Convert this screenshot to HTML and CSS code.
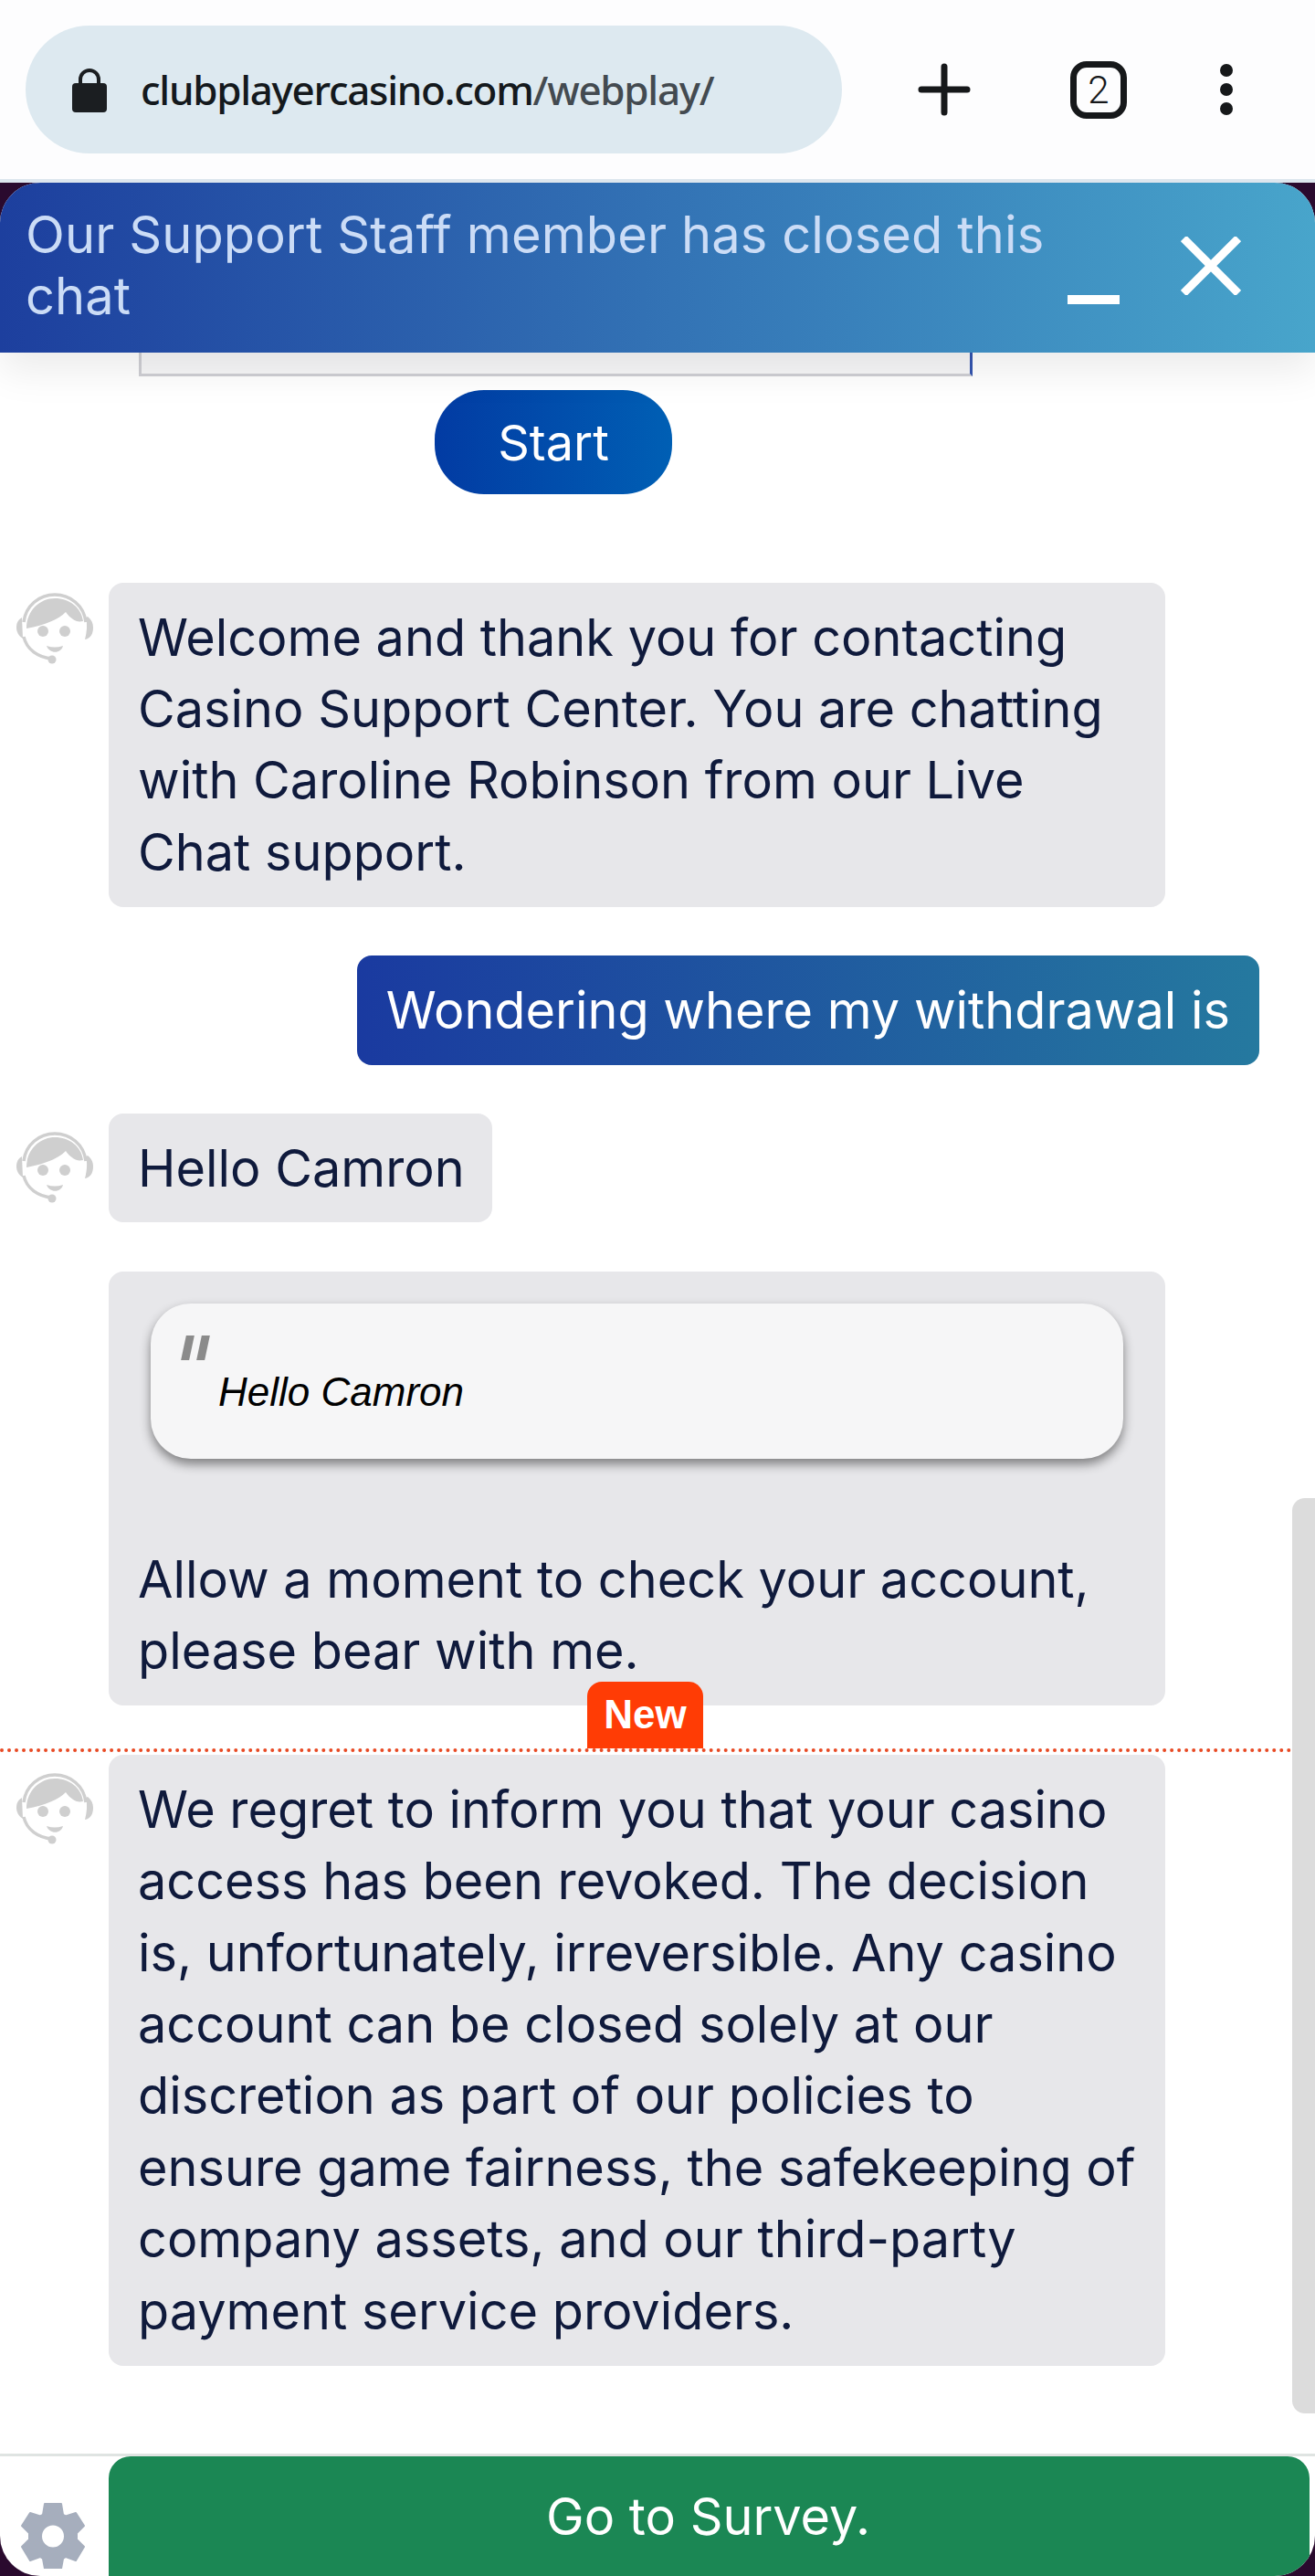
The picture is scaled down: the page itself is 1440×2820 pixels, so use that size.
FILE: index.html
```html
<!DOCTYPE html>
<html lang="en">
<head>
<meta charset="utf-8">
<title>Casino Support Chat</title>
<link rel="stylesheet" href="styles.css">
</head>
<body>
<div class="browser">
  <div class="url-pill">
    <svg class="lock" viewBox="0 0 38 49"><path d="M9 20V13a10 10 0 0 1 20 0v7" fill="none" stroke="#1b1e21" stroke-width="4"/><rect y="17" width="38" height="32" rx="4" fill="#1b1e21"/></svg>
    <span class="url"><span class="url-host">clubplayercasino.com</span><span class="url-path">/webplay/</span></span>
  </div>
  <svg class="b-plus" viewBox="0 0 58 58"><path d="M29 4v50M4 29h50" stroke="#16181a" stroke-width="7" stroke-linecap="round"/></svg>
  <div class="b-tabs">2</div>
  <svg class="b-dots" viewBox="0 0 16 58"><circle cx="8" cy="8" r="7" fill="#16181a"/><circle cx="8" cy="29" r="7" fill="#16181a"/><circle cx="8" cy="50" r="7" fill="#16181a"/></svg>
</div>
<div class="widget">
  <header class="head">
    <div class="head-text">Our Support Staff member has closed this chat</div>
    <div class="head-min"></div>
    <svg class="head-close" viewBox="0 0 66 64"><path d="M3 2l60 60M63 2L3 62" stroke="#fff" stroke-width="9"/></svg>
  </header>
  <main class="chat">
    <div class="stub"></div>
    <div class="start-wrap"><button class="start">Start</button></div>
    <div class="row row-agent first">
      <svg class="avatar" viewBox="0 0 84 78"><use href="#agent"/></svg>
      <div class="bubble">Welcome and thank you for contacting Casino Support Center. You are chatting with Caroline Robinson from our Live Chat support.</div>
    </div>
    <div class="row row-user"><div class="bubble-user">Wondering where my withdrawal is</div></div>
    <div class="row row-agent">
      <svg class="avatar" viewBox="0 0 84 78"><use href="#agent"/></svg>
      <div class="bubble">Hello Camron</div>
    </div>
    <div class="row row-agent">
      <div class="avatar-space"></div>
      <div class="bubble bubble-quote">
        <blockquote class="quote"><span class="quote-mark"></span><em>Hello Camron</em></blockquote>
        <div>Allow a moment to check your account, please bear with me.</div>
      </div>
    </div>
    <div class="new-line"><span class="new-badge">New</span></div>
    <div class="row row-agent last">
      <svg class="avatar" viewBox="0 0 84 78"><use href="#agent"/></svg>
      <div class="bubble">We regret to inform you that your casino access has been revoked. The decision is, unfortunately, irreversible. Any casino account can be closed solely at our discretion as part of our policies to ensure game fairness, the safekeeping of company assets, and our third-party payment service providers.</div>
    </div>
    <div class="scroll-thumb"></div>
  </main>
  <footer class="foot">
    <svg class="gear" viewBox="0 0 72 72"><path fill="#a6aebd" fill-rule="evenodd" stroke="#a6aebd" stroke-width="2" stroke-linejoin="round" d="M27 1h18l2 12 3 1.500 11-3.500 9 14-8 8v7l8 8-9 15-11-4-3 2-2 11H27l-2-11-3-2-11 4-9-15 8-8v-7l-8-8 9-14 11 3.500 3-1.500zM36 23.500a13 13 0 1 0 0 26 13 13 0 0 0 0-26z"/></svg>
    <button class="survey">Go to Survey.</button>
  </footer>
</div>
<svg class="defs" width="0" height="0">
  <defs>
    <g id="agent">
      <path d="M8 32C10 14 25 2 42 2s32 12 34 30" fill="none" stroke="#cfcfcf" stroke-width="3.500"/>
      <path d="M6 27C1 30 0 34 0 38s2 9 7 12z" fill="#cfcfcf"/>
      <path d="M78 26c4 3 6 7 6 12 0 7-3 12-9 13 2-8 3-16 1-24z" fill="#cfcfcf"/>
      <path d="M8 48c3 14 16 23 31 24" fill="none" stroke="#cfcfcf" stroke-width="3.500"/>
      <circle cx="39" cy="73" r="4.500" fill="#cfcfcf"/>
      <path d="M11 39C11 19 26 6 42 6s29 10 31 25c-5 1-8 0-11-2-3-2-6-5-8-8-8 8-22 14-43 18z" fill="#cfcfcf"/>
      <circle cx="29" cy="42" r="6" fill="#cfcfcf"/>
      <circle cx="53" cy="42" r="6" fill="#cfcfcf"/>
      <path d="M33 58c6 2 12 2 18 0-2 9-15 9-18 0z" fill="#cfcfcf"/>
    </g>
  </defs>
</svg>
</body>
</html>
```

FILE: styles.css
```css
* { box-sizing: border-box; }
html, body { margin: 0; padding: 0; }
body {
  width: 1440px;
  height: 2820px;
  overflow: hidden;
  background: #2a0a2e;
  font-family: "Inter", "Liberation Sans", sans-serif;
}
.defs { position: absolute; }

.browser {
  height: 200px;
  background: #fdfdfe;
  border-bottom: 4px solid #dde6ee;
  display: flex;
  align-items: center;
  padding-left: 28px;
}
.url-pill {
  width: 894px;
  height: 140px;
  border-radius: 70px;
  background: #dde9f0;
  display: flex;
  align-items: center;
  padding-left: 51px;
  gap: 37px;
}
.lock { width: 38px; height: 49px; }
.url {
  font-family: "Noto Sans", sans-serif;
  font-size: 44px;
  font-weight: 500;
  letter-spacing: -1.3px;
  white-space: nowrap;
}
.url-host { color: #14191d; }
.url-path { color: #434a50; }
.b-plus { width: 58px; height: 58px; margin-left: 83px; }
.b-tabs {
  width: 62px;
  height: 63px;
  margin-left: 109px;
  border: 7px solid #16181a;
  border-radius: 18px;
  font-family: "Roboto", sans-serif;
  font-weight: 300;
  font-size: 42px;
  color: #16181a;
  display: flex;
  align-items: center;
  justify-content: center;
}
.b-dots { width: 16px; height: 58px; margin-left: 101px; }

.widget {
  height: 2620px;
  background: #fff;
  border-radius: 44px;
  overflow: hidden;
  display: flex;
  flex-direction: column;
}
.head {
  height: 186px;
  flex: none;
  position: relative;
  z-index: 2;
  background: linear-gradient(90deg, #1d3f9e 0%, #48a5cb 100%);
  box-shadow: 0 20px 40px rgba(0, 0, 0, .08);
  padding: 24px 0 0 28px;
  display: flex;
}
.head-text {
  width: 1130px;
  font-size: 56px;
  line-height: 67px;
  letter-spacing: .1px;
  color: #cbdcf6;
}
.head-min {
  width: 57px;
  height: 10px;
  background: #fff;
  margin: 99px 0 0 11px;
}
.head-close { width: 66px; height: 64px; margin: 35px 0 0 67px; }

.chat {
  flex: 1;
  min-height: 0;
  position: relative;
  overflow: hidden;
  padding-left: 18px;
}
.stub {
  width: 913px;
  height: 26px;
  margin-left: 134px;
  background: #f7f7f8;
  border-bottom: 3px solid #cfcfd4;
  border-left: 3px solid #cfcfd4;
  border-right: 3px solid #3456b0;
}
.start-wrap { display: flex; padding-left: 458px; margin-top: 15px; }
.start {
  width: 260px;
  height: 114px;
  border: 0;
  border-radius: 54px;
  background: linear-gradient(90deg, #023ba3 0%, #005fb4 100%);
  color: #fff;
  font: 54px "Inter", sans-serif;
}
.row { display: flex; align-items: flex-start; margin-top: 53.5px; }
.row.first { margin-top: 97px; }
.row-user { justify-content: flex-end; padding-right: 61px; }
.row.last { margin-top: 0; }
.avatar { width: 84px; height: 78px; margin-top: 20px; flex: none; }
.row.first .avatar { margin-top: 11px; }
.avatar-space { width: 84px; flex: none; }
.bubble {
  margin-left: 17px;
  max-width: 1157px;
  padding: 20.5px 30px 20.5px 32px;
  background: #e7e7ea;
  border-radius: 16px;
  color: #0f1a3c;
  font-size: 55.8px;
  line-height: 78.4px;
}
.bubble-quote { width: 1157px; padding-top: 35px; }
.bubble-user {
  padding: 20.5px 32px;
  border-radius: 16px;
  background: linear-gradient(90deg, #1a3aa0 0%, #25799f 100%);
  color: #fff;
  font-size: 55.8px;
  line-height: 78.4px;
  white-space: nowrap;
}
.quote {
  margin: 0 16px 93px 14px;
  height: 170px;
  padding: 62px 0 0 74px;
  background: #f6f6f7;
  border-radius: 44px;
  box-shadow: 0 6px 12px rgba(0, 0, 0, .45);
  position: relative;
  color: #000;
  font-family: "Liberation Sans", sans-serif;
  font-size: 44px;
  line-height: 70px;
}
.quote-mark {
  position: absolute;
  left: 36px;
  top: 35px;
  width: 26px;
  height: 27px;
  background:
    linear-gradient(#8b8b8b, #8b8b8b) 0 0 / 9px 27px no-repeat,
    linear-gradient(#8b8b8b, #8b8b8b) 17px 0 / 9px 27px no-repeat;
  transform: skewX(-12deg);
}
.new-line {
  height: 51px;
  margin-left: -18px;
  margin-right: 25px;
  border-bottom: 4px dotted #e84a24;
  position: relative;
  margin-bottom: 3px;
}
.new-badge {
  position: absolute;
  left: 643px;
  bottom: 0;
  width: 127px;
  height: 73px;
  border-radius: 16px 16px 0 0;
  background: #ff3c05;
  color: #fff;
  font-family: "Liberation Sans", sans-serif;
  font-weight: 700;
  font-size: 44px;
  line-height: 72px;
  text-align: center;
}
.scroll-thumb {
  position: absolute;
  right: 0;
  top: 1254px;
  width: 25px;
  height: 1002px;
  background: #dcdcdc;
  border-radius: 14px 0 0 14px;
}

.foot {
  height: 134px;
  flex: none;
  border-top: 3px solid #dfe4e2;
  display: flex;
  align-items: flex-start;
  padding: 0 6px 0 22px;
}
.gear { width: 72px; height: 72px; margin-top: 51px; flex: none; }
.survey {
  width: 1315px;
  height: 160px;
  margin-left: 25px;
  border: 0;
  border-radius: 24px;
  background: #1b8754;
  color: #fff;
  font: 55.8px "Inter", sans-serif;
  padding: 0 2px 30px 0;
}
```
